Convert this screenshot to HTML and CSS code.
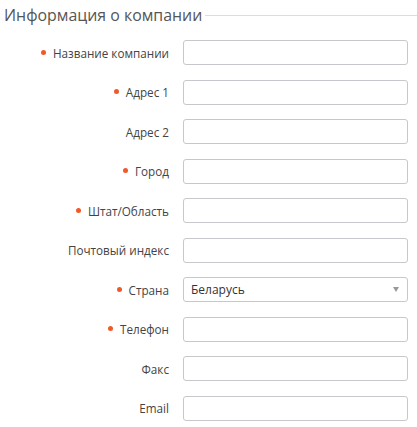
FILE: index.html
```html
<!DOCTYPE html>
<html lang="ru">
<head>
<meta charset="utf-8">
<link rel="stylesheet" href="styles.css">
</head>
<body>
<div class="page">
  <div class="legend"><span class="legend-text">Информация о компании</span><span class="legend-line"></span></div>
  <div class="form">
    <label class="label req">Название компании</label><div class="field"><input class="input" type="text"></div>
    <label class="label req">Адрес 1</label><div class="field"><input class="input" type="text"></div>
    <label class="label">Адрес 2</label><div class="field"><input class="input" type="text"></div>
    <label class="label req">Город</label><div class="field"><input class="input" type="text"></div>
    <label class="label req">Штат/Область</label><div class="field"><input class="input" type="text"></div>
    <label class="label">Почтовый индекс</label><div class="field"><input class="input" type="text"></div>
    <label class="label req">Страна</label><div class="field"><div class="select"><span>Беларусь</span><span class="arrow"></span></div></div>
    <label class="label req">Телефон</label><div class="field"><input class="input" type="text"></div>
    <label class="label">Факс</label><div class="field"><input class="input" type="text"></div>
    <label class="label">Email</label><div class="field"><input class="input" type="text"></div>
  </div>
</div>
</body>
</html>
```
FILE: styles.css
```css
html, body { margin: 0; padding: 0; background: #fff; }
body { font-family: "Open Sans", "Liberation Sans", sans-serif; color: #444; }
.page { width: 417px; }
.legend { display: flex; align-items: center; height: 30px; padding-left: 4px; }
.legend-text { font-size: 15.9px; color: #555; white-space: nowrap; line-height: 30px; }
.legend-line { flex: 1; height: 1px; background: #ddd; margin-left: 3px; }
.form {
  display: grid;
  grid-template-columns: 169px 225px;
  column-gap: 14px;
  row-gap: 14.56px;
  grid-auto-rows: 25px;
  margin-top: 10px;
}
.label {
  display: flex; align-items: center; justify-content: flex-end;
  font-size: 11.7px; color: #444; white-space: nowrap;
}
.label.req::before {
  content: ""; width: 5px; height: 5px; border-radius: 50%;
  background: #f0592a; margin-right: 7px; margin-bottom: 1px;
}
.field { display: flex; }
.input {
  box-sizing: border-box; width: 225px; height: 25px; margin: 0;
  border: 1px solid #c8c8cc; border-radius: 3px; background: #fff;
  font: inherit; font-size: 12px; padding: 0 6px; outline: none;
}
.select {
  box-sizing: border-box; width: 225px; height: 25px;
  border: 1px solid #c8c8cc; border-radius: 3px; background: #fff;
  display: flex; align-items: center; justify-content: space-between;
  padding: 0 8px 0 7px; font-size: 12px; color: #333;
}
.arrow {
  width: 0; height: 0;
  border-left: 3.5px solid transparent; border-right: 3.5px solid transparent;
  border-top: 5px solid #999;
}
```
